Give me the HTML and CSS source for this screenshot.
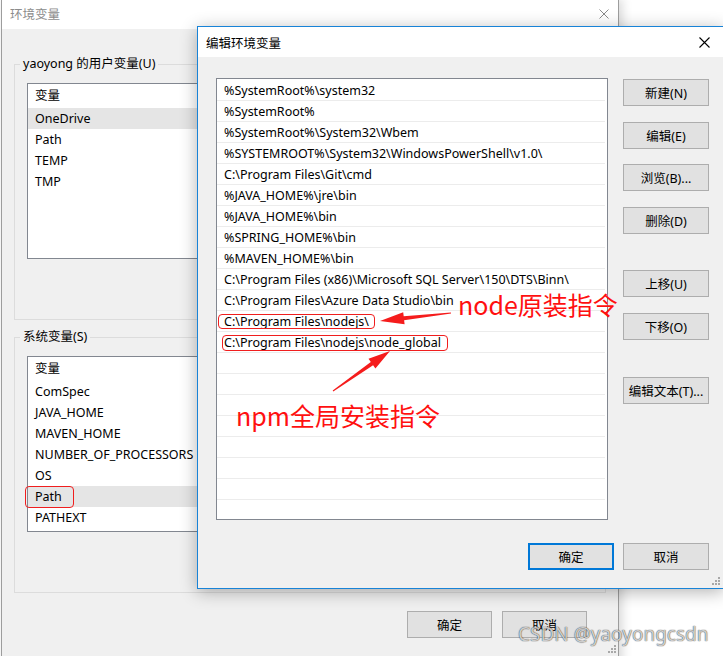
FILE: index.html
```html
<!DOCTYPE html>
<html lang="zh-CN">
<head>
<meta charset="utf-8">
<title>编辑环境变量</title>
<link rel="stylesheet" href="styles.css">
</head>
<body>
<div class="desktop">
  <section class="window bg-window">
    <header class="titlebar bg-titlebar">
      <span class="title">环境变量</span>
      <svg class="close" width="10" height="10" viewBox="0 0 10 10"><path d="M0.5 0.5L9.5 9.5M9.5 0.5L0.5 9.5" stroke="#8a8a8a" stroke-width="1" fill="none"/></svg>
    </header>
    <div class="bg-body">
      <fieldset class="group">
        <legend>yaoyong 的用户变量(U)</legend>
        <div class="varlist">
          <div class="var-head">变量</div>
          <div class="var-row selected">OneDrive</div>
          <div class="var-row">Path</div>
          <div class="var-row">TEMP</div>
          <div class="var-row">TMP</div>
        </div>
      </fieldset>
      <fieldset class="group group-sys">
        <legend>系统变量(S)</legend>
        <div class="varlist">
          <div class="var-head">变量</div>
          <div class="var-row">ComSpec</div>
          <div class="var-row">JAVA_HOME</div>
          <div class="var-row">MAVEN_HOME</div>
          <div class="var-row">NUMBER_OF_PROCESSORS</div>
          <div class="var-row">OS</div>
          <div class="var-row selected">Path</div>
          <div class="var-row">PATHEXT</div>
        </div>
      </fieldset>
      <div class="bg-footer">
        <button class="btn btn-bg">确定</button>
        <button class="btn btn-bg">取消</button>
      </div>
    </div>
    <svg class="grip grip-bg" width="9" height="9" viewBox="0 0 9 9"><g fill="#a8a8a8"><rect x="6" y="0" width="2" height="2"/><rect x="3" y="3" width="2" height="2"/><rect x="6" y="3" width="2" height="2"/><rect x="0" y="6" width="2" height="2"/><rect x="3" y="6" width="2" height="2"/><rect x="6" y="6" width="2" height="2"/></g></svg>
  </section>

  <section class="window dialog">
    <header class="titlebar dlg-titlebar">
      <span class="title">编辑环境变量</span>
      <svg class="close" width="11" height="11" viewBox="0 0 11 11"><path d="M0.5 0.5L10.5 10.5M10.5 0.5L0.5 10.5" stroke="#000" stroke-width="1.1" fill="none"/></svg>
    </header>
    <div class="dlg-body">
      <div class="dlg-main">
        <div class="path-list">
          <div class="path-row">%SystemRoot%\system32</div>
          <div class="path-row">%SystemRoot%</div>
          <div class="path-row">%SystemRoot%\System32\Wbem</div>
          <div class="path-row">%SYSTEMROOT%\System32\WindowsPowerShell\v1.0\</div>
          <div class="path-row">C:\Program Files\Git\cmd</div>
          <div class="path-row">%JAVA_HOME%\jre\bin</div>
          <div class="path-row">%JAVA_HOME%\bin</div>
          <div class="path-row">%SPRING_HOME%\bin</div>
          <div class="path-row">%MAVEN_HOME%\bin</div>
          <div class="path-row">C:\Program Files (x86)\Microsoft SQL Server\150\DTS\Binn\</div>
          <div class="path-row">C:\Program Files\Azure Data Studio\bin</div>
          <div class="path-row">C:\Program Files\nodejs\</div>
          <div class="path-row">C:\Program Files\nodejs\node_global</div>
          <div class="path-row"></div>
          <div class="path-row"></div>
          <div class="path-row"></div>
          <div class="path-row"></div>
          <div class="path-row"></div>
          <div class="path-row"></div>
          <div class="path-row"></div>
          <div class="path-row"></div>
        </div>
        <div class="btn-col">
          <button class="btn">新建(N)</button>
          <button class="btn">编辑(E)</button>
          <button class="btn">浏览(B)...</button>
          <button class="btn">删除(D)</button>
          <button class="btn btn-sep">上移(U)</button>
          <button class="btn">下移(O)</button>
          <button class="btn btn-sep">编辑文本(T)...</button>
        </div>
      </div>
      <div class="dlg-footer">
        <button class="btn btn-default">确定</button>
        <button class="btn">取消</button>
      </div>
    </div>
    <svg class="grip grip-dlg" width="9" height="9" viewBox="0 0 9 9"><g fill="#a8a8a8"><rect x="6" y="0" width="2" height="2"/><rect x="3" y="3" width="2" height="2"/><rect x="6" y="3" width="2" height="2"/><rect x="0" y="6" width="2" height="2"/><rect x="3" y="6" width="2" height="2"/><rect x="6" y="6" width="2" height="2"/></g></svg>
  </section>

  <div class="annotations">
    <div class="mark mark-path"></div>
    <div class="mark mark-node"></div>
    <div class="mark mark-global"></div>
    <svg class="arrows" width="723" height="656" viewBox="0 0 723 656">
      <polygon fill="#f51c1c" points="380,321 403.2,312.3 403.7,316.3 450.9,312.4 451.1,313.6 404.1,320.3 404.6,324.3"/>
      <polygon fill="#f51c1c" points="390,351 368.5,358.7 370.8,362.0 332.7,390.6 333.3,391.4 373.1,365.3 375.4,368.5"/>
    </svg>
    <div class="note note-node">node原装指令</div>
    <div class="note note-npm">npm全局安装指令</div>
  </div>

  <div class="watermark">CSDN @yaoyongcsdn</div>
</div>
</body>
</html>
```

FILE: styles.css
```css
* { box-sizing: border-box; }
html, body { margin: 0; padding: 0; }
body {
  width: 723px;
  height: 656px;
  overflow: hidden;
  background: #fff;
  font-family: "Noto Sans", "Noto Sans CJK SC", sans-serif;
  font-size: 12.5px;
  color: #000;
}
.desktop {
  position: relative;
  width: 723px;
  height: 656px;
  overflow: hidden;
  background: #fff;
}
.window {
  position: absolute;
  display: flex;
  flex-direction: column;
}
.titlebar {
  flex: none;
  display: flex;
  align-items: center;
  justify-content: space-between;
  background: #fff;
}
.close { display: block; }

/* background window */
.bg-window {
  left: 1px;
  top: -1px;
  width: 618px;
  height: 700px;
  border: 1px solid #9d9d9d;
  background: #f0f0f0;
  box-shadow: 3px 0 10px rgba(0, 0, 0, 0.16);
}
.bg-titlebar {
  height: 29px;
  padding: 0 9px 2px 8px;
}
.bg-titlebar .title { color: #8c8c8c; }
.bg-body {
  flex: 1;
  display: flex;
  flex-direction: column;
  padding: 0 12px;
}
.group {
  margin: 27px 0 0;
  padding: 11px 12px 60px;
  border: 1px solid #dcdcdc;
  min-width: 0;
}
.group-sys { margin-top: 9px; }
.group legend {
  padding: 0 3px;
  margin-left: -7px;
  height: 16px;
  line-height: 16px;
}
.varlist {
  height: 176px;
  border: 1px solid #828790;
  background: #fff;
}
.var-head {
  height: 24px;
  line-height: 24px;
  padding-left: 7px;
}
.var-row {
  height: 21px;
  line-height: 21px;
  padding-left: 7px;
  white-space: nowrap;
}
.var-row.selected { background: #e5e5e5; }
.bg-footer {
  display: flex;
  justify-content: flex-end;
  gap: 10px;
  margin: 18px 19px 0 0;
}

/* buttons */
.btn {
  height: 27px;
  width: 86px;
  padding: 0;
  background: #e1e1e1;
  border: 1px solid #adadad;
  font: inherit;
  color: #000;
}
.btn-bg { width: 85px; }
.btn-default { border: 2px solid #0078d7; }

/* edit dialog */
.dialog {
  left: 197px;
  top: 26px;
  width: 527px;
  height: 563px;
  border: 1px solid #1883d7;
  background: #f0f0f0;
  box-shadow: 0 3px 16px rgba(0, 0, 0, 0.3);
}
.dlg-titlebar {
  height: 30px;
  padding: 0 13px 0 8px;
}
.dlg-body {
  flex: 1;
  display: flex;
  flex-direction: column;
  padding: 21px 0 0 18px;
}
.dlg-main {
  display: flex;
  align-items: flex-start;
  gap: 15px;
}
.path-list {
  width: 392px;
  height: 442px;
  border: 1px solid #828790;
  background: #fff;
  padding: 1px 2px 0 0;
  overflow: hidden;
}
.path-row {
  height: 21px;
  line-height: 21px;
  padding-left: 7px;
  border-bottom: 1px solid #ececec;
  white-space: nowrap;
}
.btn-col {
  width: 86px;
  display: flex;
  flex-direction: column;
  gap: 15.6px;
  padding-top: 1px;
}
.btn-sep { margin-top: 21px; }
.dlg-footer {
  width: 493px;
  display: flex;
  justify-content: flex-end;
  gap: 9px;
  margin-top: 23px;
}
.grip { position: absolute; }
.grip-dlg { right: 2px; bottom: 2px; }
.grip-bg { left: 606px; top: 645px; }

/* annotations */
.annotations {
  position: absolute;
  inset: 0;
  pointer-events: none;
}
.mark {
  position: absolute;
  border: 1px solid #f01e1e;
  border-radius: 4px;
}
.mark-path { left: 25px; top: 486px; width: 49px; height: 22px; }
.mark-node { left: 218px; top: 314px; width: 157px; height: 15px; }
.mark-global { left: 222px; top: 335px; width: 226px; height: 16px; }
.arrows { position: absolute; left: 0; top: 0; }
.note {
  position: absolute;
  font-family: "Noto Sans CJK SC", sans-serif;
  font-size: 25px;
  line-height: 1;
  color: #ff1010;
  white-space: nowrap;
}
.note-node { left: 458px; top: 292px; }
.note-npm { left: 236px; top: 403px; }

.watermark {
  position: absolute;
  left: 518px;
  top: 622px;
  font-family: "Noto Sans", sans-serif;
  font-size: 19px;
  line-height: 24px;
  color: rgba(255, 255, 255, 0.75);
  text-shadow: 0 0 1px rgba(0, 0, 0, 0.7), 0 0 1px rgba(0, 0, 0, 0.5);
  white-space: nowrap;
}
```
